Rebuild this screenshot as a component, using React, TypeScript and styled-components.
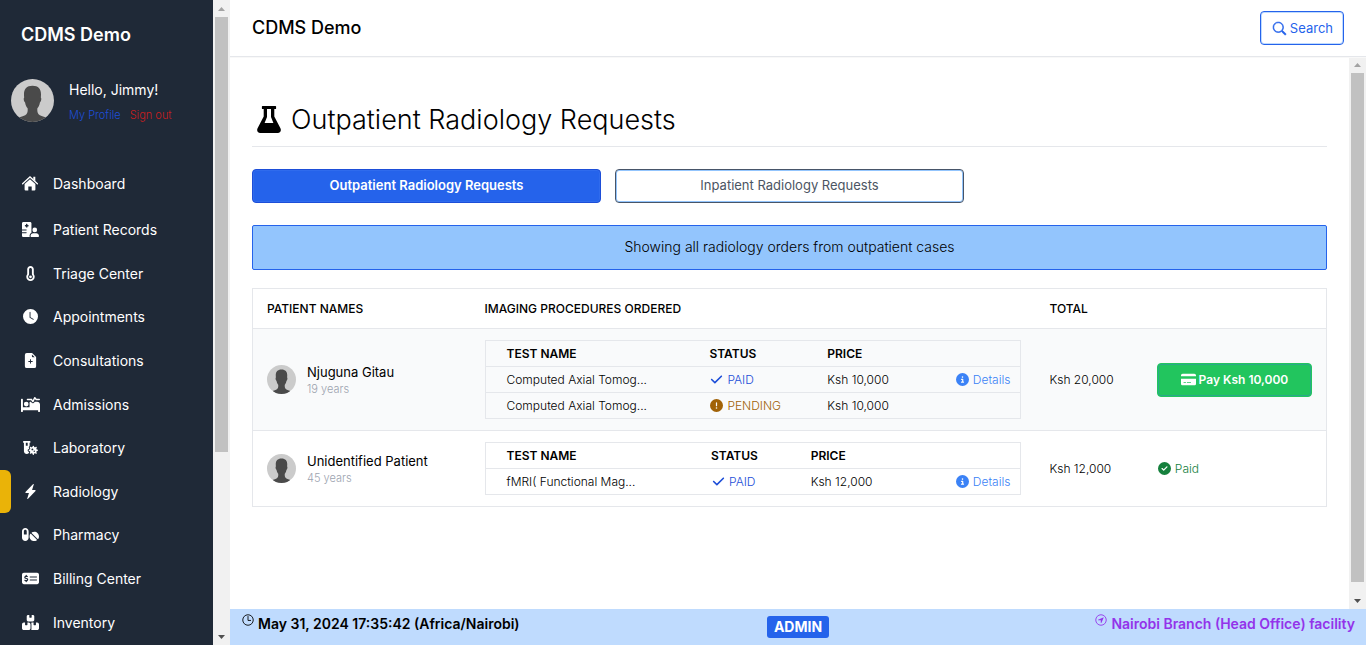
import React from 'react';
import styled, { createGlobalStyle } from 'styled-components';
import {
  FaHospitalUser, FaTemperatureEmpty, FaBedPulse, FaVialVirus, FaPills,
  FaMoneyCheckDollar, FaBoxesStacked, FaCircleInfo, FaCircleCheck,
  FaCircleExclamation, FaCreditCard, FaCheck,
} from 'react-icons/fa6';
import { BsClockFill, BsFileEarmarkPlusFill, BsLightningChargeFill, BsSearch } from 'react-icons/bs';
import { IoNavigateCircleOutline, IoTimeOutline } from 'react-icons/io5';

const Global = createGlobalStyle`
  *, *::before, *::after { box-sizing: border-box; }
  body {
    margin: 0;
    font-family: Inter, "Open Sans", "Liberation Sans", sans-serif;
    font-size: 12px;
    color: #000;
    background: #fff;
  }
  h1, h2, p { margin: 0; }
  button { font-family: inherit; cursor: pointer; }
  a { text-decoration: none; color: inherit; }
  svg { display: block; flex: none; }
`;

const Shell = styled.div`
  display: flex;
  height: 100vh;
  overflow: hidden;
`;

const Sidebar = styled.aside`
  width: 213px;
  flex: none;
  background: #1f2937;
  color: #fff;
  overflow: hidden;
`;

const SideBrand = styled.div`
  padding: 23px 21px 0;
  font-size: 18px;
  line-height: 24px;
  font-weight: 600;
`;

const Profile = styled.div`
  display: flex;
  gap: 15px;
  padding: 32px 11px 0;
  height: 114px;
`;

const ProfileText = styled.div`
  line-height: 20px;
`;

const Greeting = styled.p`
  font-size: 14px;
  line-height: 22px;
`;

const ProfileLinks = styled.div`
  display: flex;
  gap: 9px;
  margin-top: 4px;
  font-size: 11px;
  line-height: 20px;
  font-weight: 300;
`;

const ProfileLink = styled.a<{ $danger?: boolean }>`
  color: ${(p) => (p.$danger ? '#c81e1e' : '#1d4ed8')};
`;

const NavItem = styled.a<{ $active?: boolean }>`
  display: flex;
  align-items: center;
  gap: 13px;
  height: 100%;
  padding-left: ${(p) => (p.$active ? '9px' : '20px')};
  font-size: 14px;
  &::before {
    content: '';
    display: ${(p) => (p.$active ? 'block' : 'none')};
    align-self: stretch;
    width: 11px;
    margin-left: -9px;
    margin-right: -4px;
    background: #eab308;
    border-radius: 0 6px 6px 0;
  }
`;

const NavIcon = styled.span`
  display: flex;
  align-items: center;
  justify-content: center;
  width: 20px;
  height: 16px;
  font-size: 15px;
`;

const NavTop = styled.div`
  height: 44px;
  margin-bottom: 3px;
`;

const NavList = styled.nav`
  display: grid;
  grid-auto-rows: 1fr;
  height: 436px;
`;

const Track = styled.div`
  display: flex;
  flex-direction: column;
  width: 17px;
  flex: none;
  background: #f1f1f1;
`;

const TrackArrow = styled.span<{ $down?: boolean }>`
  display: flex;
  align-items: center;
  justify-content: center;
  height: 17px;
  flex: none;
  color: ${(p) => (p.$down ? '#505050' : '#a3a3a3')};
`;

const Thumb = styled.div<{ $size: number }>`
  flex: ${(p) => p.$size} 1 0;
  margin: 0 2px;
  background: #c1c1c1;
`;

const TrackRest = styled.div<{ $size: number }>`
  flex: ${(p) => p.$size} 1 0;
`;

const Content = styled.div`
  flex: 1;
  min-width: 0;
  display: flex;
  flex-direction: column;
`;

const TopBar = styled.header`
  position: relative;
  z-index: 1;
  display: flex;
  align-items: center;
  justify-content: space-between;
  height: 56px;
  flex: none;
  padding: 0 22px;
  background: #fff;
  box-shadow: 0 1px 0 #e5e7eb, 0 2px 0 #f8f8f8;
`;

const Brand = styled.div`
  font-size: 18px;
  line-height: 24px;
  font-weight: 500;
`;

const SearchButton = styled.button`
  display: flex;
  align-items: center;
  gap: 4px;
  height: 34px;
  padding: 0 10px 0 12px;
  border: 1px solid #2563eb;
  border-radius: 4px;
  box-shadow: inset 0 0 0 1px #bfdbfe;
  background: #fff;
  color: #2563eb;
  font-size: 13px;
`;

const SearchIcon = styled(BsSearch)`
  stroke: currentColor;
  stroke-width: 0.7px;
  overflow: visible;
`;

const Scroller = styled.div`
  flex: 1;
  min-height: 0;
  display: flex;
`;

const Main = styled.main`
  flex: 1;
  min-width: 0;
  overflow: hidden;
  padding: 41px 22px 0;
`;

const Title = styled.h1`
  display: flex;
  align-items: center;
  gap: 10px;
  height: 50px;
  padding: 0 0 4px 5px;
  border-bottom: 1px solid #e5e7eb;
  font-size: 27px;
  font-weight: 300;
  line-height: 36px;
`;

const Tabs = styled.div`
  display: grid;
  grid-template-columns: repeat(3, 1fr);
  gap: 14px;
  margin: 22px 0;
`;

const Tab = styled.button<{ $active?: boolean }>`
  height: 34px;
  padding: 0 0 2px;
  border-radius: 4px;
  border: 1px solid ${(p) => (p.$active ? '#1d4ed8' : '#475569')};
  box-shadow: inset 0 0 0 1px ${(p) => (p.$active ? '#2f6bed' : '#93c5fd')};
  background: ${(p) => (p.$active ? '#2563eb' : '#fff')};
  color: ${(p) => (p.$active ? '#fff' : '#4b5563')};
  font-size: 13px;
  font-weight: ${(p) => (p.$active ? 600 : 400)};
`;

const Notice = styled.p`
  padding: 10px 11px 12px;
  margin-bottom: 18px;
  border: 1px solid #2563eb;
  border-radius: 2px;
  background: #93c5fd;
  font-size: 14px;
  line-height: 21px;
  font-weight: 300;
  text-align: center;
`;

const Orders = styled.table`
  width: 100%;
  table-layout: fixed;
  border-collapse: collapse;
  border: 1px solid #e5e7eb;
`;

const OrderHead = styled.th`
  height: 40px;
  padding: 0 14px;
  text-align: left;
  font-size: 12px;
  font-weight: 500;
`;

const OrderRow = styled.tr<{ $shaded?: boolean }>`
  border-top: 1px solid #e5e7eb;
  background: ${(p) => (p.$shaded ? '#f9fafb' : '#fff')};
`;

const OrderCell = styled.td`
  padding: 11px 14px;
  font-size: 12px;
  font-weight: 300;
`;

const Patient = styled.div`
  display: flex;
  align-items: center;
  gap: 11px;
`;

const PatientName = styled.p`
  font-size: 13px;
  line-height: 18px;
  font-weight: 400;
`;

const PatientAge = styled.p`
  font-size: 11px;
  line-height: 16px;
  color: #9ca3af;
`;

const Tests = styled.table`
  width: 100%;
  table-layout: fixed;
  border-collapse: collapse;
  border: 1px solid #e5e7eb;
`;

const TestRow = styled.tr`
  height: 26px;
  border-top: 1px solid #e5e7eb;
`;

const TestHead = styled.th`
  padding: 0 10px;
  text-align: left;
  font-size: 12px;
  font-weight: 600;
  &:first-child { padding-left: 21px; }
`;

const TestCell = styled.td`
  padding: 0 10px;
  font-size: 12px;
  font-weight: 300;
  white-space: nowrap;
  &:first-child { padding-left: 21px; }
`;

const Tag = styled.span<{ $color: string }>`
  display: flex;
  align-items: center;
  gap: 4px;
  padding-left: 1px;
  color: ${(p) => p.$color};
`;

const DetailsLink = styled.a`
  display: flex;
  align-items: center;
  justify-content: flex-end;
  gap: 4px;
  color: #3b82f6;
`;

const PayButton = styled.button`
  display: flex;
  align-items: center;
  justify-content: center;
  gap: 3px;
  width: 100%;
  height: 34px;
  border: 1px solid #22c55e;
  border-radius: 4px;
  box-shadow: inset 0 0 0 1px #2aa98a;
  background: #22c55e;
  color: #fff;
  font-size: 12px;
  font-weight: 600;
`;

const Footer = styled.footer`
  display: grid;
  grid-template-columns: 1fr auto 1fr;
  height: 36px;
  flex: none;
  padding: 4px 11px 0;
  background: #bfdbfe;
  font-size: 14px;
  line-height: 22px;
  font-weight: 600;
`;

const FooterItem = styled.div<{ $end?: boolean }>`
  display: flex;
  gap: 3px;
  justify-content: ${(p) => (p.$end ? 'flex-end' : 'flex-start')};
  color: ${(p) => (p.$end ? '#9333ea' : '#000')};
`;

const Badge = styled.span`
  height: 22px;
  margin-top: 3px;
  padding: 0 7px;
  border-radius: 3px;
  background: #2563eb;
  color: #fff;
  font-weight: 700;
`;

const Avatar = ({ size }: { size: number }) => (
  <svg width={size} height={size} viewBox="0 0 44 44" aria-hidden="true">
    <clipPath id={`round${size}`}><circle cx="22" cy="22" r="22" /></clipPath>
    <g clipPath={`url(#round${size})`}>
      <rect width="44" height="44" fill="#cbcbcb" />
      <path
        d="M22 7C16 7 13.300 10.500 13.300 15.500c0 1.500.1 2.500.2 3.500-.9.500-.5 4 .9 5 .5 3 1.400 4.600 2.600 6 .3 3 0 5.500-2.500 7C11 38.500 8 39 5.500 41v4h33v-4c-2.500-2-5.500-2.500-9-4-2.500-1.500-2.800-4-2.500-7 1.200-1.400 2.100-3 2.600-6 1.400-1 1.800-4.500.9-5 .1-1 .2-2 .2-3.500C30.700 10.500 28 7 22 7z"
        fill="#4a4a4a"
      />
    </g>
  </svg>
);

const Flask = () => (
  <svg width="24" height="27" viewBox="0 0 24 27" fillRule="evenodd" aria-hidden="true">
    <path d="M5.500 0h13a.6.6 0 0 1 .6.6v1.800a.6.6 0 0 1-.6.6H17.300v7.500l6 11.500c1.300 2.600.2 5-2.500 5H3.200c-2.700 0-3.800-2.400-2.500-5l6-11.500V3H5.500a.6.6 0 0 1-.6-.6V.6a.6.6 0 0 1 .6-.6zM10 3v8L7.600 17h8.800L14 11V3z" fill="currentColor" />
  </svg>
);

const House = () => (
  <svg width="16" height="15" viewBox="0 0 16 15" aria-hidden="true">
    <path d="M.6 7.700 8 1l7.400 6.700" fill="none" stroke="currentColor" strokeWidth="1.300" strokeLinecap="round" />
    <path d="M11.300.8h2v4.400l-2-1.800z" fill="currentColor" />
    <path d="M8 3.200l5.400 4.900v5.400a1 1 0 0 1-1 1H9.700v-4H6.300v4H3.600a1 1 0 0 1-1-1V8.100z" fill="currentColor" />
  </svg>
);

const Scrollbar = ({ thumb, rest }: { thumb: number; rest: number }) => (
  <Track aria-hidden="true">
    <TrackArrow>
      <svg width="7" height="4" viewBox="0 0 7 4"><path d="M0 4 3.500 0 7 4z" fill="currentColor" /></svg>
    </TrackArrow>
    <Thumb $size={thumb} />
    <TrackRest $size={rest} />
    <TrackArrow $down>
      <svg width="7" height="4" viewBox="0 0 7 4"><path d="M0 0 3.500 4 7 0z" fill="currentColor" /></svg>
    </TrackArrow>
  </Track>
);

const links = [
  { label: 'Patient Records', icon: <FaHospitalUser size={17} /> },
  { label: 'Triage Center', icon: <FaTemperatureEmpty /> },
  { label: 'Appointments', icon: <BsClockFill /> },
  { label: 'Consultations', icon: <BsFileEarmarkPlusFill /> },
  { label: 'Admissions', icon: <FaBedPulse size={19} /> },
  { label: 'Laboratory', icon: <FaVialVirus /> },
  { label: 'Radiology', icon: <BsLightningChargeFill />, active: true },
  { label: 'Pharmacy', icon: <FaPills size={17} /> },
  { label: 'Billing Center', icon: <FaMoneyCheckDollar size={17} /> },
  { label: 'Inventory', icon: <FaBoxesStacked size={17} /> },
];

type Test = { name: string; paid: boolean; price: string };
type Order = { patient: string; age: string; total: string; due?: string; columns: string[]; tests: Test[] };

const orders: Order[] = [
  {
    patient: 'Njuguna Gitau',
    age: '19 years',
    total: 'Ksh 20,000',
    due: 'Ksh 10,000',
    columns: ['40%', '22%', '18%', '20%'],
    tests: [
      { name: 'Computed Axial Tomog...', paid: true, price: 'Ksh 10,000' },
      { name: 'Computed Axial Tomog...', paid: false, price: 'Ksh 10,000' },
    ],
  },
  {
    patient: 'Unidentified Patient',
    age: '45 years',
    total: 'Ksh 12,000',
    columns: ['40.3%', '18.6%', '21.1%', '20%'],
    tests: [{ name: 'fMRI( Functional Mag...', paid: true, price: 'Ksh 12,000' }],
  },
];

const TestTable = ({ order }: { order: Order }) => (
  <Tests>
    <colgroup>{order.columns.map((w, i) => <col key={i} width={w} />)}</colgroup>
    <thead>
      <TestRow>
        <TestHead>TEST NAME</TestHead>
        <TestHead>STATUS</TestHead>
        <TestHead>PRICE</TestHead>
        <TestHead />
      </TestRow>
    </thead>
    <tbody>
      {order.tests.map((t, i) => (
        <TestRow key={i}>
          <TestCell>{t.name}</TestCell>
          <TestCell>
            {t.paid
              ? <Tag $color="#1d4ed8"><FaCheck size={13} />PAID</Tag>
              : <Tag $color="#a16207"><FaCircleExclamation size={13} />PENDING</Tag>}
          </TestCell>
          <TestCell>{t.price}</TestCell>
          <TestCell>
            {t.paid && <DetailsLink href="#details"><FaCircleInfo size={13} />Details</DetailsLink>}
          </TestCell>
        </TestRow>
      ))}
    </tbody>
  </Tests>
);

export default function App() {
  return (
    <>
      <Global />
      <Shell>
        <Sidebar>
          <SideBrand>CDMS Demo</SideBrand>
          <Profile>
            <Avatar size={43} />
            <ProfileText>
              <Greeting>Hello, Jimmy!</Greeting>
              <ProfileLinks>
                <ProfileLink href="#profile">My Profile</ProfileLink>
                <ProfileLink href="#signout" $danger>Sign out</ProfileLink>
              </ProfileLinks>
            </ProfileText>
          </Profile>
          <NavTop>
            <NavItem href="#dashboard"><NavIcon><House /></NavIcon>Dashboard</NavItem>
          </NavTop>
          <NavList>
            {links.map((l) => (
              <NavItem key={l.label} href="#section" $active={l.active}>
                <NavIcon>{l.icon}</NavIcon>{l.label}
              </NavItem>
            ))}
          </NavList>
        </Sidebar>
        <Scrollbar thumb={435} rest={176} />
        <Content>
          <TopBar>
            <Brand>CDMS Demo</Brand>
            <SearchButton type="button"><SearchIcon size={13} />Search</SearchButton>
          </TopBar>
          <Scroller>
            <Main>
              <Title><Flask />Outpatient Radiology Requests</Title>
              <Tabs>
                <Tab type="button" $active>Outpatient Radiology Requests</Tab>
                <Tab type="button">Inpatient Radiology Requests</Tab>
              </Tabs>
              <Notice>Showing all radiology orders from outpatient cases</Notice>
              <Orders>
                <colgroup>
                  <col width="20.3%" />
                  <col width="52.6%" />
                  <col width="10%" />
                  <col width="17.1%" />
                </colgroup>
                <thead>
                  <tr>
                    <OrderHead>PATIENT NAMES</OrderHead>
                    <OrderHead>IMAGING PROCEDURES ORDERED</OrderHead>
                    <OrderHead>TOTAL</OrderHead>
                    <OrderHead />
                  </tr>
                </thead>
                <tbody>
                  {orders.map((o) => (
                    <OrderRow key={o.patient} $shaded={!!o.due}>
                      <OrderCell>
                        <Patient>
                          <Avatar size={29} />
                          <div>
                            <PatientName>{o.patient}</PatientName>
                            <PatientAge>{o.age}</PatientAge>
                          </div>
                        </Patient>
                      </OrderCell>
                      <OrderCell><TestTable order={o} /></OrderCell>
                      <OrderCell>{o.total}</OrderCell>
                      <OrderCell>
                        {o.due
                          ? <PayButton type="button"><FaCreditCard size={15} />Pay {o.due}</PayButton>
                          : <Tag $color="#15803d"><FaCircleCheck size={13} />Paid</Tag>}
                      </OrderCell>
                    </OrderRow>
                  ))}
                </tbody>
              </Orders>
            </Main>
            <Scrollbar thumb={509} rest={10} />
          </Scroller>
          <Footer>
            <FooterItem><IoTimeOutline size={14} />May 31, 2024 17:35:42 (Africa/Nairobi)</FooterItem>
            <Badge>ADMIN</Badge>
            <FooterItem $end><IoNavigateCircleOutline size={14} />Nairobi Branch (Head Office) facility</FooterItem>
          </Footer>
        </Content>
      </Shell>
    </>
  );
}
